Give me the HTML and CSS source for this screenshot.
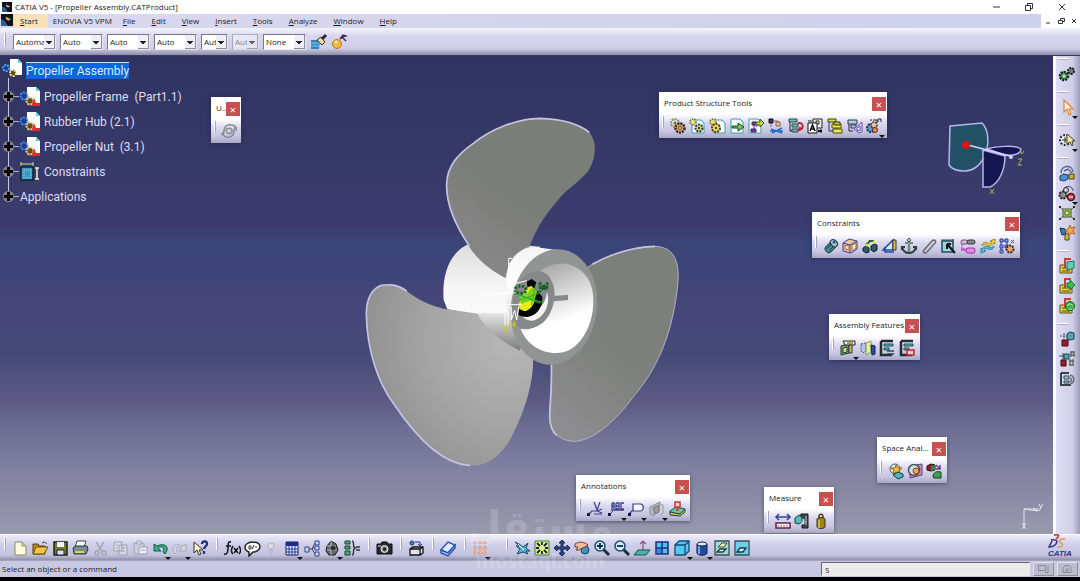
FILE: index.html
```html
<!DOCTYPE html>
<html lang="en">
<head>
<meta charset="utf-8">
<title>CATIA V5 - [Propeller Assembly.CATProduct]</title>
<link rel="stylesheet" href="styles.css">
</head>
<body>
<svg class="sprite" aria-hidden="true">
  <defs>
    <linearGradient id="hubL" x1="0" y1="0" x2="0" y2="1"><stop offset="0" stop-color="#dcdcdc"/><stop offset=".4" stop-color="#f6f6f6"/><stop offset="1" stop-color="#fff"/></linearGradient>
    <linearGradient id="hubR" x1="0" y1="0" x2="0" y2="1"><stop offset="0" stop-color="#f4f4f4"/><stop offset=".35" stop-color="#fff"/><stop offset=".65" stop-color="#e0e0e0"/><stop offset="1" stop-color="#7c7c7c"/></linearGradient>
    <linearGradient id="bore" x1="0" y1="0" x2=".3" y2="1"><stop offset="0" stop-color="#999"/><stop offset=".35" stop-color="#c9c9c9"/><stop offset=".75" stop-color="#fff"/></linearGradient>
    <radialGradient id="bladeL" cx=".85" cy=".3" r=".95"><stop offset="0" stop-color="#b6b7b6"/><stop offset=".55" stop-color="#a2a3a2"/><stop offset="1" stop-color="#8c8d8c"/></radialGradient>
    <linearGradient id="bladeR" x1=".2" y1="1" x2=".6" y2=".3"><stop offset="0" stop-color="#8e8d90"/><stop offset=".6" stop-color="#7f817e"/><stop offset="1" stop-color="#7d7f7b"/></linearGradient>
    <linearGradient id="bladeT" x1="0" y1="1" x2=".4" y2=".4"><stop offset="0" stop-color="#8a898c"/><stop offset="1" stop-color="#7b7d79"/></linearGradient>
  </defs>
  <symbol id="app" viewBox="0 0 12 12"><path fill="#101018" d="M0 0h12v12H0z"/><path fill="#2d5f95" d="M0 5l4 2 3 5H0z"/><path fill="#e9a35a" d="M5 3l5 2-3 2z"/><path fill="#f4e6c8" d="M4 3l3 2-1 1z"/></symbol>
  <symbol id="gears" viewBox="0 0 18 18"><circle cx="6" cy="6" r="4" fill="#dfe6b0" stroke="#8a8a78" stroke-width="2" stroke-dasharray="2 1"/><circle cx="6" cy="6" r="1.5" fill="#5a66b0"/><circle cx="11" cy="11" r="4.500" fill="#f0a860" stroke="#33271c" stroke-width="2.500" stroke-dasharray="2 1"/><circle cx="11" cy="11" r="1.500" fill="#fff" stroke="#333"/></symbol>
  <symbol id="docgear" viewBox="0 0 18 18"><path d="M4 3h9l3 3v10H4z" fill="#f4fbff" stroke="#3aa0a8"/><circle cx="5" cy="5" r="3" fill="#e5e070" stroke="#6a6a40" stroke-width="1.500" stroke-dasharray="1.500 1"/><circle cx="11" cy="11" r="3.500" fill="#d8d858" stroke="#27395a" stroke-width="2" stroke-dasharray="2 1"/><circle cx="11" cy="11" r="1" fill="#111"/></symbol>
  <symbol id="docgear2" viewBox="0 0 18 18"><path d="M6 3h8l3 3v10H6z" fill="#f4fbff" stroke="#3aa0a8"/><circle cx="5" cy="5" r="3" fill="#eee06a" stroke="#6a6a40" stroke-width="1.500" stroke-dasharray="1.500 1"/><circle cx="8" cy="11" r="4" fill="#f3d75a" stroke="#4a4020" stroke-width="2" stroke-dasharray="2 1"/><circle cx="8" cy="11" r="1" fill="#111"/></symbol>
  <symbol id="docarrow" viewBox="0 0 18 18"><path d="M3 2h9l3 3v11H3z" fill="#f4fbff" stroke="#3aa0a8"/><path d="M4 9h6V6l6 4-6 4v-3H4z" fill="#6fc95a" stroke="#1b4c1b"/></symbol>
  <symbol id="docarrow2" viewBox="0 0 18 18"><path d="M2 2h9l3 3v11H2z" fill="#f4fbff" stroke="#3aa0a8"/><path d="M5 5h4v3H5zM4 12h5v3H4zM7 8v4M9 10l3-4" fill="#7a3a9a" stroke="#4a1c6a"/><path d="M9 5h4V2l4 4-4 4V8H9z" fill="#c8dc4a" stroke="#38521b"/></symbol>
  <symbol id="replace" viewBox="0 0 18 18"><path d="M2 2h4v4H2z" fill="#3a3a5a" stroke="#111"/><path d="M6 4h5v5M4 6v4" stroke="#8a5a8a" fill="none"/><path d="M9 5h4v4H9z" fill="#e8c8b0" stroke="#8a5a3a"/><path d="M4 12l11 4M15 11L5 16M3 14h13" stroke="#2a6cd0" stroke-width="1.600"/></symbol>
  <symbol id="reorder" viewBox="0 0 18 18"><path d="M2 2h8v3H2zM5 7h6v3H5zM5 12h6v3H5z" fill="#78b8b8" stroke="#264a4e"/><path d="M3 5v9h2" stroke="#222" fill="none"/><path d="M11 6c6-1 6 6 1 7l1-3" stroke="#c0242c" stroke-width="2" fill="none"/></symbol>
  <symbol id="number" viewBox="0 0 18 18"><path d="M7 2h9v9H7z" fill="#eee" stroke="#222"/><path d="M10 4h3v3h-3zM2 4h4M15 12v4" stroke="#222" fill="none"/><path d="M2 6h9v10H2z" fill="#fff" stroke="#111"/><path d="M4 14l2.500-6L9 14M5 12h3" stroke="#111" stroke-width="1.600" fill="none"/><path d="M12 14h4" stroke="#111" stroke-width="2"/></symbol>
  <symbol id="selload" viewBox="0 0 18 18"><path d="M2 2h8v3H2z" fill="#e8dc30" stroke="#2c3a22"/><path d="M6 7h9v4H6zM7 12h9v4H7z" fill="#f3e640" stroke="#4c4a12"/><path d="M3 5v9h4" stroke="#235" fill="none"/><path d="M8 5h6v3H8z" fill="#d7c623" stroke="#333"/></symbol>
  <symbol id="manage" viewBox="0 0 18 18"><path d="M2 3h9v4H2zM5 8h5v3H5z" fill="#a9cfe0" stroke="#33394e"/><path d="M3 7v7h4" stroke="#223" fill="none"/><path d="M8 12l8-7v10l-3 1z" fill="#dcc8f4" stroke="#7a52b8"/><path d="M11 11l3-2v4l-3 1z" fill="#fff" stroke="#4a55b8"/></symbol>
  <symbol id="multi" viewBox="0 0 18 18"><circle cx="6" cy="11" r="4" fill="#5a9ad0" stroke="#1d2f4c" stroke-width="2" stroke-dasharray="2 1"/><circle cx="9" cy="8" r="3" fill="#e7c3a0" stroke="#4a3424" stroke-width="1.500" stroke-dasharray="2 1"/><path d="M8 3h4v3M13 5V2h3v3M5 3h2" stroke="#222" fill="none"/><circle cx="10" cy="13" r="2.500" fill="#e8954a" stroke="#422"/></symbol>
  <symbol id="coin" viewBox="0 0 18 18"><g transform="rotate(-45 9 9)"><rect x="2" y="6" width="14" height="7" rx="3" fill="#4f9aa0" stroke="#143c44"/><ellipse cx="13" cy="9" rx="3" ry="4" fill="#9fc9cc" stroke="#1d3f46"/><path d="M4 8h7M4 11h6" stroke="#163f48"/></g><circle cx="12" cy="5" r="1.500" fill="#3c4c8a"/></symbol>
  <symbol id="contact" viewBox="0 0 18 18"><path d="M2 6l6-4 8 2v8l-6 4-8-2z" fill="#e9c8a0" stroke="#3c3c9c"/><path d="M2 6l7 2v8M9 8l7-4" stroke="#3c3c9c" fill="none"/><path d="M4 8l4 1v4l-4-1zM11 8l4-2v5l-4 3z" fill="#f5eab8" stroke="#b06a3a"/></symbol>
  <symbol id="offset" viewBox="0 0 18 18"><path d="M2 11l3-2 3 2v4l-3 1-3-2zM10 9l3-2 3 1v5l-3 2-3-2z" fill="#2f5d64" stroke="#0e2328"/><path d="M5 8l4-4M8 4h5" stroke="#2c6a2c" stroke-width="2"/><circle cx="6" cy="8" r="1.500" fill="#e8e040"/><circle cx="13" cy="5" r="1.500" fill="#e8e040"/></symbol>
  <symbol id="angle" viewBox="0 0 18 18"><path d="M2 13L12 3v10z" fill="#cfe6f4" stroke="#2846a8" stroke-width="1.500"/><path d="M12 3h3v10h-3z" fill="#e5c34a" stroke="#3a3226"/><path d="M4 10v5h9" fill="none" stroke="#2846a8" stroke-width="1.400"/></symbol>
  <symbol id="anchor" viewBox="0 0 18 18"><path d="M9 4v12M5 6h8M2 10c1 4 4 6 7 6s6-2 7-6M2 13v-3h3M16 13v-3h-3" fill="none" stroke="#31433c" stroke-width="2.200"/><circle cx="9" cy="3" r="1.500" fill="#fff" stroke="#31433c"/><path d="M9 6v9M5 6h8" stroke="#b3d0b4"/></symbol>
  <symbol id="clip" viewBox="0 0 18 18"><path d="M5 12l7-8c2-2 5 0 3 2l-8 9c-2 2-5 0-3-2l7-8" fill="none" stroke="#6e6e72" stroke-width="1.600"/></symbol>
  <symbol id="quick" viewBox="0 0 18 18"><path d="M3 4h11v11H3z" fill="#9ed2dc" stroke="#1f4a64" stroke-width="1.500"/><path d="M2 3h13M14 2v5" stroke="#4a4a4a"/><path d="M8 7l8 9M8 7v5M8 7h4" stroke="#111" stroke-width="2"/></symbol>
  <symbol id="flex" viewBox="0 0 18 18"><rect x="2" y="3" width="7" height="4" rx="2" fill="#d9c4dd" stroke="#6f466f"/><rect x="8" y="3" width="8" height="4" rx="2" fill="#8c8c98" stroke="#333"/><path d="M3 7v6h5" stroke="#a838b8" fill="none" stroke-dasharray="2 1"/><rect x="7" y="11" width="9" height="5" rx="2" fill="#e48ae8" stroke="#93309a"/><path d="M2 11h4v3H2z" fill="#d05ada"/></symbol>
  <symbol id="change" viewBox="0 0 18 18"><path d="M3 9c0-4 4-4 6-3s3 1 4-1l-2-1 5-2v5l-1-1c-2 3-5 3-7 2S5 7 3 9z" fill="#f0d838" stroke="#a08a1c"/><path d="M15 9c0 4-4 4-6 3s-3-1-4 1l2 1-5 2v-5l1 1c2-3 5-3 7-2s3 1 5-1z" fill="#52bfe0" stroke="#2a7fa0"/></symbol>
  <symbol id="reuse" viewBox="0 0 18 18"><path d="M2 2h3v3H2zM7 2h3v3H7zM2 8h3v3H2zM2 13h3v3H2zM7 8h3v3H7zM5 4h2M3 5v3M9 5v3M3 11v2" fill="#8fa9e8" stroke="#2a3c9c"/><path d="M13 3l3 3M16 3l-3 3" stroke="#555"/><circle cx="12" cy="12" r="3.500" fill="#e2a868" stroke="#3b2a1c" stroke-width="2" stroke-dasharray="2 1"/></symbol>
  <symbol id="hole" viewBox="0 0 18 18"><path d="M2 7l8-2v9l-8 2z" fill="#7fa86a" stroke="#243a1e"/><path d="M4 9l4-1v5l-4 1z" fill="#c5e5b4" stroke="#243a1e"/><path d="M4 2h12v4H6z" fill="#eee" stroke="#222"/><path d="M8 4h6" stroke="#c09b2a" stroke-width="2"/><path d="M10 6h3v8h-3z" fill="#b9c958" stroke="#333"/></symbol>
  <symbol id="symm" viewBox="0 0 18 18"><path d="M2 5l5-1v8l-3 2-2-2z" fill="#b9c4e0" stroke="#4a568a" stroke-dasharray="2 1"/><path d="M7 4l5-2v11l-5 3z" fill="#e4efa2" stroke="#849a48"/><path d="M12 6l4 1v8l-3 1z" fill="#2f4aa8" stroke="#141f4c"/></symbol>
  <symbol id="assoc" viewBox="0 0 18 18"><path d="M3 2h12M3 2v14h11" stroke="#222c33" stroke-width="2.500" fill="none"/><path d="M6 5h9v2H6zM6 9h5v2H6z" fill="#5dbfc0" stroke="#1d4a52"/><path d="M9 12h7M9 15h7" stroke="#2d4a52" stroke-width="1.500"/></symbol>
  <symbol id="assoc2" viewBox="0 0 18 18"><path d="M3 2h12M3 2v14h11" stroke="#222c33" stroke-width="2.500" fill="none"/><path d="M6 5h9v2H6zM6 9h5v2H6z" fill="#5dbfc0" stroke="#1d4a52"/><path d="M9 11h7v5H9z" fill="#f4c8c8" stroke="#c8202c" stroke-width="1.500"/></symbol>
  <symbol id="clash" viewBox="0 0 18 18"><circle cx="8" cy="7" r="5" fill="#d7edf0" stroke="#4a5a5c"/><path d="M9 3l2 3h4l-3 2 1 4-4-2-3 2 1-4-3-2h4z" fill="#f0be38" stroke="#9a6418"/><path d="M6 13l5-3 5 2v3l-5 2z" fill="#4fb4b8" stroke="#153e42"/></symbol>
  <symbol id="section" viewBox="0 0 18 18"><path d="M4 4l12-2v11L4 16z" fill="#b595b8" stroke="#6c3c6e"/><circle cx="8" cy="8" r="5.500" fill="#cfe4e8" stroke="#47525a" stroke-width="1.500"/><circle cx="10" cy="9" r="3" fill="#f0a850" stroke="#903c28"/></symbol>
  <symbol id="distband" viewBox="0 0 18 18"><path d="M2 4l4-2 4 1v5l-4 1-4-1z" fill="#8a2030" stroke="#24100e"/><path d="M6 4l4-1v5l-4 1z" fill="#2e8a3c"/><path d="M11 3l4 4M15 3v4h-4" stroke="#6a3a9a" fill="none" stroke-width="1.500"/><path d="M8 15c0-5 4-6 8-5v6H9z" fill="#3fa048" stroke="#123c1c"/></symbol>
  <symbol id="weld" viewBox="0 0 18 18"><path d="M3 14l3-3h5l5-2M8 2l3 8 3-8M8 14h8M11 11l5 2" fill="none" stroke="#3c3f88" stroke-width="1.200"/><path d="M1 13h3v3H1z" fill="#16183c"/></symbol>
  <symbol id="note" viewBox="0 0 18 18"><path d="M5 9V3M5 3h2v6M5 6h2M9 3v6h3V3H9M9 6h3M17 3h-3v6h3M4 10h13" fill="none" stroke="#3c3f88" stroke-width="1.300"/><path d="M6 11l-4 4" stroke="#3c3f88"/><path d="M1 13h3v3H1z" fill="#16183c"/></symbol>
  <symbol id="flag" viewBox="0 0 18 18"><path d="M6 4h8c3 1 3 6 0 7H6zM6 10l-4 4" fill="#f6f6ff" stroke="#3c3f88" stroke-width="1.200"/><path d="M1 13h3v3H1z" fill="#16183c"/></symbol>
  <symbol id="views" viewBox="0 0 18 18"><path d="M2 7l10-5v8l-6 3v3l-4-2z" fill="#bdbdc0" stroke="#8a8a90"/><path d="M5 8l6-3v7l-4 2z" fill="#9a9aa0" stroke="#77777c"/><path d="M12 4l3 1v8l-3 2" fill="#d5d5d8" stroke="#99999e"/></symbol>
  <symbol id="annot3d" viewBox="0 0 18 18"><path d="M2 11l6-4 9 2-5 5-10-1z" fill="#6cc4a0" stroke="#164c3c"/><path d="M2 12v3l10 1 5-4V9l-5 5z" fill="#e0b048" stroke="#164c3c"/><path d="M7 2h5v5H7z" fill="#f8d8d8" stroke="#cc3030" stroke-width="1.500"/><path d="M9.500 7v4" stroke="#cc3030" stroke-width="2"/></symbol>
  <symbol id="measure" viewBox="0 0 18 18"><path d="M2 5h14M5 2L2 5l3 3M13 2l3 3-3 3" fill="none" stroke="#3345a0" stroke-width="1.600"/><path d="M2 11h14v5H2z" fill="#fff" stroke="#5a2440" stroke-width="1.500"/><path d="M4 13v2M7 13v2M10 13v2M13 13v2" stroke="#c04060"/></symbol>
  <symbol id="caliper" viewBox="0 0 18 18"><path d="M8 2h7v14H9v-3h3V6H7z" fill="#3c4c50" stroke="#14181c"/><path d="M2 6l4-3 3 2v5l-3 2-4-1z" fill="#4ec4b0" stroke="#1d3a48"/><path d="M8 10h5M13 4v9" stroke="#c5ccd0"/></symbol>
  <symbol id="inertia" viewBox="0 0 18 18"><path d="M5 7c2-2 6-2 8 0v8c-2 2-6 2-8 0z" fill="#9c8420" stroke="#3a2f0c"/><path d="M7 8v8" stroke="#dcc654" stroke-width="1.500"/><path d="M7 6c-1-5 5-5 4 0" fill="none" stroke="#4a3c14" stroke-width="1.500"/></symbol>
  <symbol id="update" viewBox="0 0 18 18"><path d="M1 12c2 1 3 0 3-3 0-5 4-7 8-6 4 0 5 4 4 6M17 6c-2-1-3 0-3 3 0 5-4 7-8 6-3-1-4-4-2-6M6 9c0-3 6-4 6 0s-6 3-5 0" fill="none" stroke="#8a8a8a" stroke-width="1.500"/></symbol>
  <symbol id="new" viewBox="0 0 18 18"><path d="M4 3h7l4 4v9H4z" fill="#fffce0" stroke="#8c8a5c"/><path d="M11 3v4h4" fill="#d8d59c" stroke="#8c8a5c"/></symbol>
  <symbol id="open" viewBox="0 0 18 18"><path d="M2 5h5l1 2h6v8H2z" fill="#c08a18" stroke="#5a3c0c"/><path d="M5 8h12l-4 7H2z" fill="#f2c744" stroke="#6a4a10"/><path d="M11 4c3-2 4 0 5 1" fill="none" stroke="#333"/></symbol>
  <symbol id="save" viewBox="0 0 18 18"><path d="M3 3h13v13H3z" fill="#6d7a3a" stroke="#1f2414" stroke-width="1.500"/><path d="M6 3h7v5H6z" fill="#f4f4ec"/><path d="M6 11h7v5H6z" fill="#dfe5ef" stroke="#22262c"/></symbol>
  <symbol id="print" viewBox="0 0 18 18"><path d="M6 2h9l-2 6H4z" fill="#fff" stroke="#444"/><path d="M2 9l3-2h11l1 3-2 5H3z" fill="#7a8f94" stroke="#22343a"/><path d="M4 13h9" stroke="#dcd64c" stroke-width="2"/></symbol>
  <symbol id="cut" viewBox="0 0 18 18"><path d="M5 3l6 9M13 3l-6 9" stroke="#a5a5b4" stroke-width="1.500"/><circle cx="6" cy="14" r="2" fill="none" stroke="#a5a5b4" stroke-width="1.500"/><circle cx="13" cy="14" r="2" fill="none" stroke="#a5a5b4" stroke-width="1.500"/></symbol>
  <symbol id="copy" viewBox="0 0 18 18"><path d="M3 3h8v9H3zM8 6h8v10H8z" fill="#d8d8e6" stroke="#a0a0b2"/><path d="M10 9h4M10 12h4M5 6h2M5 9h2" stroke="#a0a0b2"/></symbol>
  <symbol id="paste" viewBox="0 0 18 18"><path d="M3 4h10v11H3z" fill="#cdcdde" stroke="#a0a0b2"/><path d="M6 2h4v3H6zM8 8h8v7H8z" fill="#ececf6" stroke="#a0a0b2"/><path d="M10 11h4" stroke="#a0a0b2"/></symbol>
  <symbol id="undo" viewBox="0 0 18 18"><path d="M3 5v7h7L7 9c4-3 7 0 5 4l2 2c5-6 1-12-8-8z" fill="#3fae88" stroke="#0d5a44"/></symbol>
  <symbol id="redo" viewBox="0 0 18 18"><path d="M15 5v7H8l3-3c-4-3-7 0-5 4l-2 2C-1 9 3 3 12 7z" fill="#d4d4e2" stroke="#aaaabb"/></symbol>
  <symbol id="help" viewBox="0 0 18 18"><path d="M3 3v11l3-3 2 5 2-1-2-4h4z" fill="#fff8cc" stroke="#333"/><path d="M11 5c0-4 6-3 5 0 0 2-3 3-3 5M13 12v3" fill="none" stroke="#1d2c7c" stroke-width="2.200"/></symbol>
  <symbol id="fx" viewBox="0 0 18 18"><path d="M8 3C5 2 5 5 5 9s-1 7-4 6M3 7h5M10 7c-2 3-2 6 0 8M16 7c2 3 2 6 0 8M11 9l4 5M15 9l-4 5" fill="none" stroke="#15151c" stroke-width="1.500"/></symbol>
  <symbol id="comment" viewBox="0 0 18 18"><path d="M9 3c5 0 8 2 8 5s-4 5-7 5l-4 4v-4c-3-1-4-3-4-5s3-5 7-5z" fill="#fff" stroke="#222" stroke-width="1.500"/><path d="M6 7h2v3H6zM11 6l-2 4M12 8h2" fill="none" stroke="#333"/></symbol>
  <symbol id="bulb" viewBox="0 0 18 18"><circle cx="8" cy="7" r="3" fill="#dedeea" stroke="#b0b0c2"/><path d="M7 10h2v5H7z" fill="#cfcfe0" stroke="#b0b0c2"/></symbol>
  <symbol id="table" viewBox="0 0 18 18"><path d="M3 3h12v13H3z" fill="#e8ecff" stroke="#101c5c"/><path d="M3 3h12v4H3z" fill="#1c2c88"/><path d="M3 10h12M3 13h12M6 7v9M9 7v9M12 7v9" stroke="#27388c"/></symbol>
  <symbol id="graph" viewBox="0 0 18 18"><path d="M2 8h4v5H2zM12 2h4v4h-4zM12 7h4v4h-4zM12 13h4v4h-4z" fill="#cdd8f8" stroke="#30408c"/><path d="M6 10h3l3-6M9 9h3M9 10l3 5" stroke="#444" fill="none"/></symbol>
  <symbol id="lock" viewBox="0 0 18 18"><path d="M4 7l4-5 5 3 2 6-3 5H6l-3-4z" fill="#62666a" stroke="#16181a"/><path d="M8 2v14M4 7h9M4 11h10" stroke="#bbb"/><circle cx="10" cy="9" r="2.500" fill="#333"/></symbol>
  <symbol id="equiv" viewBox="0 0 18 18"><path d="M2 2h5v3H2zM2 7h5v3H2zM2 12h5v4H2z" fill="#52a878" stroke="#173c2c"/><path d="M9 2c3 0 0 6 3 7-3 1 0 7-3 7M13 8h4M13 11h4" fill="none" stroke="#33383c" stroke-width="1.400"/></symbol>
  <symbol id="camera" viewBox="0 0 18 18"><path d="M2 5h4l1-2h5l1 2h4v10H2z" fill="#25282c" stroke="#0c0d10"/><circle cx="9.500" cy="10" r="3.500" fill="#8c9198" stroke="#eee"/><circle cx="9.500" cy="10" r="1.500" fill="#111"/><path d="M3 7h3" stroke="#ddd"/></symbol>
  <symbol id="catalog" viewBox="0 0 18 18"><circle cx="5" cy="4" r="2" fill="#3c8cb8" stroke="#163c5a"/><path d="M8 3h5v4M11 5l2 2 2-2" stroke="#24388c" fill="none"/><path d="M3 10l3-2h10v6l-3 2H3zM3 10h10l3-2M13 10v6" fill="#e4e4e8" stroke="#111" stroke-width="1.300"/></symbol>
  <symbol id="eraser" viewBox="0 0 18 18"><path d="M2 11l7-8 7 3-7 8z" fill="#dcecff" stroke="#2a50b0" stroke-width="1.400"/><path d="M2 11v3l7 3 7-8V6l-7 8z" fill="#a4c4f0" stroke="#2a50b0" stroke-width="1.400"/></symbol>
  <symbol id="grid" viewBox="0 0 18 18"><path d="M2 4h14M2 9h14M2 14h14M4 2v14M9 2v14M14 2v14" stroke="#e0a890" stroke-width="2" stroke-dasharray="3 1"/></symbol>
  <symbol id="fly" viewBox="0 0 18 18"><path d="M2 3l4 2 4 3 5-4-2 5 4 3h-4l2 3-5-2-6 2 3-5-4-3 3 0z" fill="#5ab0d0" stroke="#174c6c"/><path d="M5 5l6 6" stroke="#fff"/></symbol>
  <symbol id="fit" viewBox="0 0 18 18"><path d="M2 2h14v14H2z" fill="#e4f07c" stroke="#3c7c4c"/><path d="M4 4l3 3M14 4l-3 3M4 14l3-3M14 14l-3-3M9 3v3M9 12v3M3 9h3M12 9h3" stroke="#16244c" stroke-width="1.800"/></symbol>
  <symbol id="pan" viewBox="0 0 18 18"><path d="M9 1l3 3h-2v4h4V6l3 3-3 3v-2h-4v4h2l-3 3-3-3h2v-4H4v2L1 9l3-3v2h4V4H6z" fill="#2c4c94" stroke="#142450"/></symbol>
  <symbol id="rotate" viewBox="0 0 18 18"><circle cx="12" cy="11" r="4" fill="#3c94c8" stroke="#154064"/><path d="M2 5c4-3 10-2 13 1l-3 2c-2 1-4 1-6 3H3l2-3H2z" fill="#f0bc9c" stroke="#703c2c"/></symbol>
  <symbol id="zoomin" viewBox="0 0 18 18"><path d="M10 10l6 6" stroke="#18303c" stroke-width="3"/><circle cx="7" cy="7" r="5" fill="#d0f0f4" stroke="#20486c" stroke-width="1.500"/><path d="M7 4v6M4 7h6" stroke="#14245c" stroke-width="1.800"/></symbol>
  <symbol id="zoomout" viewBox="0 0 18 18"><path d="M10 10l6 6" stroke="#18303c" stroke-width="3"/><circle cx="7" cy="7" r="5" fill="#d0f0f4" stroke="#20486c" stroke-width="1.500"/><path d="M4 7h6" stroke="#14245c" stroke-width="1.800"/></symbol>
  <symbol id="normal" viewBox="0 0 18 18"><path d="M1 16l4-5h12l-4 5z" fill="#4cb4ac" stroke="#17504c"/><path d="M10 12V3M7 5l3-3 3 3" fill="none" stroke="#8a4c8c" stroke-width="1.200"/></symbol>
  <symbol id="multiview" viewBox="0 0 18 18"><path d="M3 3h12v12H3z" fill="#4cc4ec" stroke="#182c84" stroke-width="1.500"/><path d="M9 3v12M3 9h12" stroke="#182c84" stroke-width="1.500"/><path d="M4 10h4v4H4z" fill="#3c84dc"/></symbol>
  <symbol id="cube" viewBox="0 0 18 18"><path d="M2 6l4-4h10v10l-4 4H2z" fill="#54c8f0" stroke="#184870" stroke-width="1.300"/><path d="M2 6h10v10M12 6l4-4" fill="none" stroke="#184870" stroke-width="1.300"/></symbol>
  <symbol id="cyl" viewBox="0 0 18 18"><path d="M4 5v9c0 3 10 3 10 0V5z" fill="#24489c" stroke="#101c44"/><path d="M6 6v9" stroke="#68b0f0" stroke-width="2"/><ellipse cx="9" cy="5" rx="5" ry="2" fill="#d8ecf8" stroke="#101c44"/></symbol>
  <symbol id="hide" viewBox="0 0 18 18"><path d="M2 2h14v14H2z" fill="#9cdcd4" stroke="#3c4c54" stroke-width="1.300"/><path d="M5 8l4-4h5l-3 4z" fill="#f0ecb0" stroke="#324c44"/><path d="M4 13l3-3h6l-3 3z" fill="#e8f4e0" stroke="#183c3c" stroke-width="1.300"/></symbol>
  <symbol id="swap" viewBox="0 0 18 18"><path d="M2 2h14v14H2z" fill="#6cd0ec" stroke="#3c4c54" stroke-width="1.300"/><path d="M4 13l3-4h6l-3 4z" fill="#d8f0ec" stroke="#183c3c" stroke-width="1.300"/></symbol>
  <symbol id="brush" viewBox="0 0 18 18"><path d="M1 7h9l-1 9H1z" fill="#2c84c8"/><path d="M1 10h8M1 13h8" stroke="#8cd0f0"/><path d="M7 7l5 5 3-3-4-5z" fill="#e8dc98" stroke="#333"/><path d="M12 6l4-4" stroke="#26282c" stroke-width="3"/></symbol>
  <symbol id="wizard" viewBox="0 0 18 18"><circle cx="7" cy="11" r="4.500" fill="#f0b83c" stroke="#b4781c"/><circle cx="6" cy="9" r="1.500" fill="#fff0b8"/><path d="M10 6l3-4 3 1-3 1zM12 4l4 4" fill="#5c3c78" stroke="#3c2450" stroke-width="1.300"/></symbol>
  <symbol id="asmdesign" viewBox="0 0 18 18"><circle cx="6" cy="11" r="4" fill="#4c9c5c" stroke="#15261c" stroke-width="2.500" stroke-dasharray="2 1"/><circle cx="6" cy="11" r="1.500" fill="#bcdcc4"/><circle cx="13" cy="6" r="3" fill="#70807c" stroke="#15201c" stroke-width="2" stroke-dasharray="2 1"/></symbol>
  <symbol id="pointer" viewBox="0 0 18 18"><path d="M6 2v12l3-3 2 6 2-1-2-5h4z" fill="#fff4e0" stroke="#dc8444" stroke-width="1.200"/></symbol>
  <symbol id="selgear" viewBox="0 0 18 18"><circle cx="7" cy="9" r="5" fill="#ececf0" stroke="#26262c" stroke-width="2" stroke-dasharray="2 1.500"/><path d="M7 6v6M4 9h6" stroke="#333"/><path d="M9 3v10l3-2 2 4 1-1-1-4h3z" fill="#f8ec9c" stroke="#44402c"/></symbol>
  <symbol id="prodnav" viewBox="0 0 18 18"><path d="M3 9c0-8 11-9 12-1M6 7l4-2 4 4" fill="none" stroke="#54648c" stroke-width="1.400"/><path d="M2 12l3-2 5 1v4l-4 2-4-1z" fill="#4894d0" stroke="#163c6c"/><path d="M11 10h5v5h-5z" fill="#c8b438" stroke="#4c3c14"/></symbol>
  <symbol id="cgrswap" viewBox="0 0 18 18"><circle cx="5" cy="11" r="3.500" fill="#8c8c94" stroke="#222" stroke-width="2" stroke-dasharray="2 1"/><path d="M6 6c2-5 8-5 9 1" fill="none" stroke="#6c5ca8" stroke-width="1.400"/><circle cx="8" cy="6" r="2.500" fill="#cfcfd4" stroke="#222"/><circle cx="13" cy="13" r="3.500" fill="#d84858" stroke="#4c141c" stroke-width="1.500"/><path d="M11 13h4" stroke="#fff"/></symbol>
  <symbol id="explode" viewBox="0 0 18 18"><path d="M2 3l14 12M16 3L2 15" stroke="#445c2c"/><path d="M5 5h8v8H5z" fill="#b4cc5c" stroke="#445c2c"/><path d="M1 2h2v2H1zM15 2h2v2h-2zM1 14h2v2H1zM15 14h2v2h-2z" fill="#26341c"/><path d="M7 7h4v4H7z" fill="#e4ec9c" stroke="#445c2c"/></symbol>
  <symbol id="manip" viewBox="0 0 18 18"><path d="M2 4l5 1 1 5-4 1z" fill="#3c7cb8" stroke="#152c4c"/><path d="M7 10h4v6H7z" fill="#d0c040" stroke="#4c4414"/><path d="M12 1l1 3 4-1-2 4 2 3-4-1-2 3-1-4-3-1 3-2z" fill="#f0a848" stroke="#b4642c"/></symbol>
  <symbol id="comp" viewBox="0 0 18 18"><path d="M2 8h5v3h7v5H2z" fill="#e4d040" stroke="#544c14"/><path d="M7 10V2h6" fill="none" stroke="#d03c2c" stroke-width="2"/><path d="M9 5l7-1v7l-7 2z" fill="#5cd0b8" stroke="#1c7464"/><path d="M4 11h3M4 14h8" stroke="#544c14"/></symbol>
  <symbol id="comp2" viewBox="0 0 18 18"><path d="M2 8h5v3h7v5H2z" fill="#e4d040" stroke="#544c14"/><path d="M7 10V2h6" fill="none" stroke="#d03c2c" stroke-width="2"/><path d="M9 6h3V3l5 5-5 5v-3H9z" fill="#3cc448" stroke="#14701c"/><path d="M4 11h3M4 14h8" stroke="#544c14"/></symbol>
  <symbol id="comp3" viewBox="0 0 18 18"><path d="M2 8h5v3h7v5H2z" fill="#e4d040" stroke="#544c14"/><path d="M7 10V2h6" fill="none" stroke="#d03c2c" stroke-width="2"/><path d="M4 11h3M4 14h8" stroke="#544c14"/><circle cx="12" cy="9" r="4.500" fill="#3cb44c" stroke="#145c20"/><path d="M9 9c2-3 5-2 6 0M15 11c-2 2-4 2-5 0" fill="none" stroke="#b8f0b8"/></symbol>
  <symbol id="tree1" viewBox="0 0 18 18"><path d="M2 6h14M6 3v12" stroke="#444c54" stroke-dasharray="2 1"/><path d="M9 4l3-2 4 1v6l-4 1-3-1z" fill="#4ca4b4" stroke="#18404c"/><path d="M4 10h6v6H4z" fill="#94202c" stroke="#3c1014"/></symbol>
  <symbol id="tree2" viewBox="0 0 18 18"><path d="M1 6h9M5 3v9" stroke="#444c54"/><path d="M6 4h5v5H6z" fill="#4ca4b4" stroke="#18404c"/><path d="M3 10h5v6H3z" fill="#94202c" stroke="#3c1014"/><path d="M12 2h5M12 5h5M13 2v5M16 2v5M11 11h5M11 15h5M12 9v6M15 9v6" stroke="#64645c" stroke-width="1.300"/></symbol>
  <symbol id="tree3" viewBox="0 0 18 18"><path d="M3 3h8M3 3v12h10" stroke="#34444c" stroke-width="2" fill="none"/><path d="M6 6h5v3H6zM6 11h5v2H6z" fill="#a8ccd0" stroke="#34444c"/><path d="M12 5c5 1 5 8 0 9M12 8c2 1 2 3 0 4" fill="none" stroke="#5c6c74" stroke-width="1.500"/></symbol>
  <symbol id="product" viewBox="0 0 20 20"><path d="M8 1h8l4 4v12H8z" fill="#fff"/><path d="M16 1l4 4h-4z" fill="#54d4e4"/><circle cx="4" cy="10" r="3" fill="#1c3c8c" stroke="#4ca4f4" stroke-width="2" stroke-dasharray="2 1"/><circle cx="11" cy="15" r="3" fill="#5c481c" stroke="#f4d88c" stroke-width="2" stroke-dasharray="2 1"/></symbol>
  <symbol id="part" viewBox="0 0 20 20"><path d="M7 0h9l4 4v13H7z" fill="#fff"/><path d="M16 0l4 4h-4z" fill="#54d4e4"/><circle cx="4" cy="9" r="3.500" fill="#1c3c8c" stroke="#4494f4" stroke-width="2" stroke-dasharray="2 1"/><circle cx="10" cy="14" r="3.500" fill="#6c481c" stroke="#f4d08c" stroke-width="2" stroke-dasharray="2 1"/><path d="M14 11l2 5h4v3h-8z" fill="#dc2c2c"/></symbol>
  <symbol id="constr" viewBox="0 0 20 20"><path d="M1 5h12v13H1z" fill="#3c9cc0" stroke="#0c2434" stroke-width="1.500"/><path d="M4 8h7v8H4z" fill="none" stroke="#94d8f0" stroke-dasharray="1 1"/><path d="M1 2h12M1 0v4M13 0v4" stroke="#d0dc8c"/><path d="M15 6h4M15 17h4M17 6v11" stroke="#f4f4c8" stroke-width="1.500"/></symbol>
</svg>

<header class="titlebar">
  <svg class="app-icon"><use href="#app"/></svg>
  <h1 class="title">CATIA V5 - [Propeller Assembly.CATProduct]</h1>
  <div class="win-controls">
    <button aria-label="Minimize"><svg viewBox="0 0 10 10"><path d="M2 5h7"/></svg></button>
    <button aria-label="Restore"><svg viewBox="0 0 10 10"><path d="M1.500 3.500h5v5h-5zM3.500 3V1.500h5v5H7"/></svg></button>
    <button aria-label="Close"><svg viewBox="0 0 10 10"><path d="M2 2l6 6M8 2L2 8"/></svg></button>
  </div>
</header>

<nav class="menubar" aria-label="Main menu">
  <svg class="app-icon big"><use href="#app"/></svg>
  <button class="menu start"><u>S</u>tart</button>
  <button class="menu vpm">ENOVIA V5 VPM</button>
  <button class="menu"><u>F</u>ile</button>
  <button class="menu"><u>E</u>dit</button>
  <button class="menu"><u>V</u>iew</button>
  <button class="menu"><u>I</u>nsert</button>
  <button class="menu"><u>T</u>ools</button>
  <button class="menu"><u>A</u>nalyze</button>
  <button class="menu"><u>W</u>indow</button>
  <button class="menu"><u>H</u>elp</button>
  <div class="doc-controls">
    <button aria-label="Minimize document"><svg viewBox="0 0 10 10"><path d="M3 7h4"/></svg></button>
    <button aria-label="Restore document"><svg viewBox="0 0 10 10"><path d="M2.500 4.500h4v3h-4zM4.500 4V2.500h4v3H7"/></svg></button>
    <button aria-label="Close document"><svg viewBox="0 0 10 10"><path d="M3 3l4 4M7 3L3 7"/></svg></button>
  </div>
</nav>

<div class="propbar" role="toolbar" aria-label="Graphic properties">
  <span class="grip"></span>
  <label class="combo"><select aria-label="Fill color"><option>Automatic</option></select></label>
  <label class="combo"><select aria-label="Transparency"><option>Auto</option></select></label>
  <label class="combo"><select aria-label="Line weight"><option>Auto</option></select></label>
  <label class="combo"><select aria-label="Line type"><option>Auto</option></select></label>
  <label class="combo small"><select aria-label="Point symbol"><option>Auto</option></select></label>
  <label class="combo small off"><select aria-label="Rendering style" disabled><option>Auto</option></select></label>
  <label class="combo"><select aria-label="Layer"><option>None</option></select></label>
  <button class="tool" aria-label="Painter"><svg><use href="#brush"/></svg></button>
  <button class="tool" aria-label="Wizard"><svg><use href="#wizard"/></svg></button>
</div>

<div class="workspace">
  <main class="viewport">
    <svg class="propeller" viewBox="0 0 1080 1140" role="img" aria-label="Propeller assembly">
      <path fill="url(#hubL)" d="M390 430C330 455 305 520 311 600L322 628L420 645L520 760L590 640L600 440L500 430z"/>
      <path fill="url(#bladeR)" stroke="#b2b0ca" stroke-width="3" d="M745 500C800 465 880 440 945 439C1000 441 1018 480 1014 545C1000 700 950 810 880 890C830 960 760 1022 705 1024C655 1024 628 990 629 950C632 880 636 850 635 780z"/>
      <path fill="none" stroke="#c6c4e2" stroke-width="5" d="M757 493C810 463 880 440 945 439M634 795C636 850 632 880 629 950C630 980 638 996 650 1006"/>
      <path fill="url(#bladeL)" d="M310 626C270 616 235 600 200 573C170 553 150 552 125 556C90 568 80 600 79 640C80 750 115 850 160 910C220 1000 300 1092 390 1097C450 1100 490 1060 520 1000C555 930 580 850 580 775L420 642z"/>
      <path fill="none" stroke="#c6c4e2" stroke-width="5" d="M200 573C170 553 150 552 125 556C90 568 80 600 79 640C80 750 115 850 160 910C220 1000 300 1092 390 1097"/>
      <path fill="url(#hubR)" d="M500 535C505 480 540 436 590 442L690 455L560 600L540 752C480 725 430 680 412 640L500 640z"/>
      <path fill="url(#bladeT)" d="M497 534C430 500 390 455 365 400C335 350 318 300 320 250C322 200 350 165 400 130C450 90 530 55 600 55C680 57 720 75 748 97C775 130 765 180 745 212C720 245 680 265 650 305C610 350 585 395 568 440C525 455 505 480 497 534z"/>
      <path fill="none" stroke="#c6c4e2" stroke-width="5" d="M388 438C335 360 318 300 320 250C322 200 350 165 400 130C450 90 530 55 600 55C680 57 720 75 748 97"/>
      <ellipse cx="642" cy="621" rx="129" ry="174" transform="rotate(8 642 621)" fill="#929393"/>
      <path fill="url(#bore)" d="M592 522C620 490 670 482 705 500C745 520 762 560 760 610C758 680 720 745 670 757C610 767 560 735 542 686C590 700 640 640 640 585C640 545 620 525 592 522z"/>
      <path fill="#87888a" d="M530 560C550 520 590 500 620 522C650 550 650 600 630 640C610 680 570 695 535 680C510 640 515 600 530 560z"/>
      <path fill="#f4f4f4" d="M540 640C590 650 620 610 620 575C635 610 610 660 575 662C560 662 548 654 540 640z"/>
      <path fill="#88898b" d="M640 588L684 584V600L640 604z"/>
      <path fill="#050505" d="M535 645C575 665 610 630 607 590L590 570C585 610 560 630 537 628zM560 545l15-8 14 10-6 18-20-2z"/>
      <path fill="#eaea18" d="M536 610C550 600 550 560 575 558C592 580 588 620 560 632C545 635 536 628 536 610z"/>
      <path fill="#7bd021" d="M538 590l25-10 14-20 15 14-8 24-40 14z"/>
      <path fill="none" stroke="#12602a" stroke-width="9" stroke-dasharray="7 4" d="M526 566c6-12 28-10 32 2s-24 18-32 4M598 548l24 24M624 548l-26 28M596 562h32"/>
      <path fill="none" stroke="#28b428" stroke-width="3" d="M520 580l90 28M540 600l66-24M588 556l-14 60M600 610l-60-24"/>
      <path fill="none" stroke="#fff" stroke-width="3" d="M420 584l105-6M440 615h28v30M506 475v60M506 475h10M506 490h10M495 614h50M495 614v62M504 616v60M514 620v40l10-30 6 30 6-40M520 552l40-10"/>
      <path fill="none" stroke="#c8c828" stroke-width="4" d="M490 680l8 10 8-10M498 690v12M514 664v18M514 674h10M524 664v18"/>
    </svg>

    <svg class="compass" viewBox="0 0 84 80" role="img" aria-label="Compass">
      <path fill="#225064" stroke="#b8b4ee" stroke-width="1.500" d="M9 5l32-3c6 6 7 18 5 26-4 14-12 22-23 22-8 0-13-3-15-6z"/>
      <path fill="#141650" stroke="#b8b4ee" stroke-width="1.500" d="M46 28c10-3 29-4 34 0 0 5-8 7-16 6zM42 29l22 6c0 14-6 27-15 31h-7z"/>
      <path stroke="#d4d0ff" stroke-width="1.500" fill="none" d="M27 24l42 11"/>
      <circle cx="25" cy="24" r="4" fill="#e01414"/>
      <circle cx="70" cy="36" r="2" fill="#d4d0ff"/>
      <path stroke="#b4b458" fill="none" d="M77 38h4l-4 6h4M79 30l2 3 2-3M49 68l4 5M53 68l-4 5"/>
    </svg>

    <svg class="axes" viewBox="0 0 28 30" aria-hidden="true"><path d="M6 27V8l14 2-5-3M6 8h15M21 3l2 4M25 3l-4 7M4 22l4 6M8 22l-4 6" fill="none" stroke="#e4e4f0"/></svg>

    <ul class="tree" aria-label="Specification tree">
      <li class="root"><svg class="node"><use href="#product"/></svg><span class="selected">Propeller Assembly</span></li>
      <li><button class="expand" aria-label="Expand Propeller Frame"></button><svg class="node"><use href="#part"/></svg><span>Propeller Frame &nbsp;(Part1.1)</span></li>
      <li><button class="expand" aria-label="Expand Rubber Hub"></button><svg class="node"><use href="#part"/></svg><span>Rubber Hub (2.1)</span></li>
      <li><button class="expand" aria-label="Expand Propeller Nut"></button><svg class="node"><use href="#part"/></svg><span>Propeller Nut &nbsp;(3.1)</span></li>
      <li><button class="expand" aria-label="Expand Constraints"></button><svg class="node"><use href="#constr"/></svg><span>Constraints</span></li>
      <li><button class="expand" aria-label="Expand Applications"></button><span>Applications</span></li>
    </ul>

    <section class="palette p-update">
      <header><h2>U..</h2><button class="close" aria-label="Close">×</button></header>
      <div class="tools"><button class="tool" aria-label="Update all" disabled><svg><use href="#update"/></svg></button></div>
    </section>
    <section class="palette p-structure">
      <header><h2>Product Structure Tools</h2><button class="close" aria-label="Close">×</button></header>
      <div class="tools">
        <button class="tool" aria-label="Component"><svg><use href="#gears"/></svg></button>
        <button class="tool" aria-label="Product"><svg><use href="#docgear"/></svg></button>
        <button class="tool" aria-label="Part"><svg><use href="#docgear2"/></svg></button>
        <button class="tool" aria-label="Existing component"><svg><use href="#docarrow"/></svg></button>
        <button class="tool" aria-label="Existing component with positioning"><svg><use href="#docarrow2"/></svg></button>
        <button class="tool" aria-label="Replace component"><svg><use href="#replace"/></svg></button>
        <button class="tool" aria-label="Graph tree reordering"><svg><use href="#reorder"/></svg></button>
        <button class="tool" aria-label="Generate numbering"><svg><use href="#number"/></svg></button>
        <button class="tool" aria-label="Selective load"><svg><use href="#selload"/></svg></button>
        <button class="tool" aria-label="Manage representations"><svg><use href="#manage"/></svg></button>
        <button class="tool more" aria-label="Multi-instantiation"><svg><use href="#multi"/></svg></button>
      </div>
    </section>
    <section class="palette p-constraints">
      <header><h2>Constraints</h2><button class="close" aria-label="Close">×</button></header>
      <div class="tools">
        <button class="tool" aria-label="Coincidence"><svg><use href="#coin"/></svg></button>
        <button class="tool" aria-label="Contact"><svg><use href="#contact"/></svg></button>
        <button class="tool" aria-label="Offset"><svg><use href="#offset"/></svg></button>
        <button class="tool" aria-label="Angle"><svg><use href="#angle"/></svg></button>
        <button class="tool" aria-label="Fix component"><svg><use href="#anchor"/></svg></button>
        <button class="tool" aria-label="Fix together"><svg><use href="#clip"/></svg></button>
        <button class="tool" aria-label="Quick constraint"><svg><use href="#quick"/></svg></button>
        <button class="tool" aria-label="Flexible sub-assembly"><svg><use href="#flex"/></svg></button>
        <button class="tool" aria-label="Change constraint"><svg><use href="#change"/></svg></button>
        <button class="tool" aria-label="Reuse pattern"><svg><use href="#reuse"/></svg></button>
      </div>
    </section>
    <section class="palette p-features">
      <header><h2>Assembly Features</h2><button class="close" aria-label="Close">×</button></header>
      <div class="tools">
        <button class="tool more" aria-label="Hole"><svg><use href="#hole"/></svg></button>
        <button class="tool" aria-label="Symmetry"><svg><use href="#symm"/></svg></button>
        <button class="tool" aria-label="Associativity"><svg><use href="#assoc"/></svg></button>
        <button class="tool" aria-label="Remove associativity"><svg><use href="#assoc2"/></svg></button>
      </div>
    </section>
    <section class="palette p-space">
      <header><h2>Space Anal...</h2><button class="close" aria-label="Close">×</button></header>
      <div class="tools">
        <button class="tool" aria-label="Clash"><svg><use href="#clash"/></svg></button>
        <button class="tool" aria-label="Sectioning"><svg><use href="#section"/></svg></button>
        <button class="tool" aria-label="Distance and band analysis"><svg><use href="#distband"/></svg></button>
      </div>
    </section>
    <section class="palette p-annotations">
      <header><h2>Annotations</h2><button class="close" aria-label="Close">×</button></header>
      <div class="tools">
        <button class="tool" aria-label="Weld feature"><svg><use href="#weld"/></svg></button>
        <button class="tool more" aria-label="Text with leader"><svg><use href="#note"/></svg></button>
        <button class="tool more" aria-label="Flag note"><svg><use href="#flag"/></svg></button>
        <button class="tool more" aria-label="Views"><svg><use href="#views"/></svg></button>
        <button class="tool" aria-label="3D annotation query"><svg><use href="#annot3d"/></svg></button>
      </div>
    </section>
    <section class="palette p-measure">
      <header><h2>Measure</h2><button class="close" aria-label="Close">×</button></header>
      <div class="tools">
        <button class="tool" aria-label="Measure between"><svg><use href="#measure"/></svg></button>
        <button class="tool" aria-label="Measure item"><svg><use href="#caliper"/></svg></button>
        <button class="tool" aria-label="Measure inertia"><svg><use href="#inertia"/></svg></button>
      </div>
    </section>
  </main>

  <aside class="sidebar" role="toolbar" aria-label="Workbench tools">
    <div class="vgroup"><button class="tool" aria-label="Assembly design"><svg><use href="#asmdesign"/></svg></button></div>
    <div class="vgroup"><button class="tool more" aria-label="Select"><svg><use href="#pointer"/></svg></button></div>
    <div class="vgroup"><button class="tool more" aria-label="Product selection"><svg><use href="#selgear"/></svg></button></div>
    <div class="vgroup">
      <button class="tool" aria-label="Manipulation"><svg><use href="#prodnav"/></svg></button>
      <button class="tool more" aria-label="Snap"><svg><use href="#cgrswap"/></svg></button>
      <button class="tool" aria-label="Explode"><svg><use href="#explode"/></svg></button>
      <button class="tool" aria-label="Stop manipulate on clash"><svg><use href="#manip"/></svg></button>
    </div>
    <div class="vgroup">
      <button class="tool" aria-label="Scene component"><svg><use href="#comp"/></svg></button>
      <button class="tool" aria-label="Publish component"><svg><use href="#comp2"/></svg></button>
      <button class="tool" aria-label="Refresh component"><svg><use href="#comp3"/></svg></button>
    </div>
    <div class="vgroup">
      <button class="tool" aria-label="Product data"><svg><use href="#tree1"/></svg></button>
      <button class="tool" aria-label="Product properties"><svg><use href="#tree2"/></svg></button>
      <button class="tool" aria-label="Product list"><svg><use href="#tree3"/></svg></button>
    </div>
  </aside>
</div>

<div class="bottombar" role="toolbar" aria-label="Standard and view tools">
  <div class="hgroup">
    <button class="tool" aria-label="New"><svg><use href="#new"/></svg></button>
    <button class="tool" aria-label="Open"><svg><use href="#open"/></svg></button>
    <button class="tool" aria-label="Save"><svg><use href="#save"/></svg></button>
    <button class="tool" aria-label="Print"><svg><use href="#print"/></svg></button>
    <button class="tool" aria-label="Cut"><svg><use href="#cut"/></svg></button>
    <button class="tool" aria-label="Copy"><svg><use href="#copy"/></svg></button>
    <button class="tool" aria-label="Paste"><svg><use href="#paste"/></svg></button>
    <button class="tool more" aria-label="Undo"><svg><use href="#undo"/></svg></button>
    <button class="tool more" aria-label="Redo"><svg><use href="#redo"/></svg></button>
    <button class="tool" aria-label="What's this"><svg><use href="#help"/></svg></button>
  </div>
  <div class="hgroup">
    <button class="tool" aria-label="Formula"><svg><use href="#fx"/></svg></button>
    <button class="tool" aria-label="Comment and URLs"><svg><use href="#comment"/></svg></button>
    <button class="tool" aria-label="Check analysis"><svg><use href="#bulb"/></svg></button>
    <button class="tool more" aria-label="Design table"><svg><use href="#table"/></svg></button>
    <button class="tool" aria-label="Knowledge inspector"><svg><use href="#graph"/></svg></button>
    <button class="tool more" aria-label="Lock parameters"><svg><use href="#lock"/></svg></button>
    <button class="tool" aria-label="Equivalent dimensions"><svg><use href="#equiv"/></svg></button>
  </div>
  <div class="hgroup"><button class="tool" aria-label="Capture"><svg><use href="#camera"/></svg></button></div>
  <div class="hgroup"><button class="tool" aria-label="Catalog browser"><svg><use href="#catalog"/></svg></button></div>
  <div class="hgroup"><button class="tool" aria-label="Apply material"><svg><use href="#eraser"/></svg></button></div>
  <div class="hgroup"><button class="tool more" aria-label="Work on support"><svg><use href="#grid"/></svg></button></div>
  <div class="hgroup view">
    <button class="tool" aria-label="Fly mode"><svg><use href="#fly"/></svg></button>
    <button class="tool" aria-label="Fit all in"><svg><use href="#fit"/></svg></button>
    <button class="tool" aria-label="Pan"><svg><use href="#pan"/></svg></button>
    <button class="tool" aria-label="Rotate"><svg><use href="#rotate"/></svg></button>
    <button class="tool" aria-label="Zoom in"><svg><use href="#zoomin"/></svg></button>
    <button class="tool" aria-label="Zoom out"><svg><use href="#zoomout"/></svg></button>
    <button class="tool" aria-label="Normal view"><svg><use href="#normal"/></svg></button>
    <button class="tool" aria-label="Multi-view"><svg><use href="#multiview"/></svg></button>
    <button class="tool more" aria-label="Isometric view"><svg><use href="#cube"/></svg></button>
    <button class="tool more" aria-label="Shading"><svg><use href="#cyl"/></svg></button>
    <button class="tool" aria-label="Hide or show"><svg><use href="#hide"/></svg></button>
    <button class="tool" aria-label="Swap visible space"><svg><use href="#swap"/></svg></button>
  </div>
  <div class="brand">
    <svg viewBox="0 0 18 16" aria-hidden="true"><path d="M6 1c5-1 6 1 2 4" fill="none" stroke="#c83c3c" stroke-width="1.800"/><path d="M3 6c7-1 7 2 4 5-1 1-3 2-6 2l3-6" fill="none" stroke="#34388c" stroke-width="1.600"/><path d="M17 5c-5-1-7 2-4 4 3 1 1 5-4 4" fill="none" stroke="#d8a46c" stroke-width="1.800"/></svg>
    <span>CATIA</span>
  </div>
</div>

<div class="watermark" aria-hidden="true"><span class="wm-ar" lang="ar" dir="rtl">مستقل</span><span class="wm-en">mostaql.com</span></div>

<footer class="statusbar">
  <span class="message">Select an object or a command</span>
  <input class="command" type="text" value="S" aria-label="Power input">
  <button class="status-btn" aria-label="Dialog options"><svg viewBox="0 0 14 10"><path d="M1.500 1.500h7v5h-7zM8 8.500h3v-7"/></svg></button>
  <button class="status-btn" aria-label="Screen capture"><svg viewBox="0 0 14 10"><path d="M2 8.500v-4c1-4 7-4 8 0v4zM5 5h2v2H5z"/></svg></button>
</footer>
</body>
</html>
```
FILE: styles.css
```css
*, *::before, *::after { box-sizing: border-box; }
body {
  margin: 0;
  height: 100vh;
  display: flex;
  flex-direction: column;
  padding-bottom: 4px;
  position: relative;
  overflow: hidden;
  background: #000;
  color: #1c1c1c;
  font: 8px/12px "Open Sans", "Noto Sans", sans-serif;
}
button, select, input { font: inherit; color: inherit; margin: 0; }
button { padding: 0; border: 0; background: none; }
svg { display: block; }
.sprite { position: absolute; width: 0; height: 0; }

.titlebar { display: flex; align-items: center; height: 14px; padding-left: 2px; gap: 3px; background: #fff; }
.app-icon { width: 10px; height: 10px; }
.app-icon.big { width: 14px; height: 12px; }
.title { margin: 0; font-size: 8px; font-weight: 400; line-height: 12px; }
.win-controls { display: flex; gap: 23px; margin-left: auto; padding-right: 13px; }
.win-controls svg, .doc-controls svg { width: 10px; height: 10px; fill: none; stroke: #333; }

.menubar { display: flex; height: 14px; background: linear-gradient(90deg, #d9d8ee, #cfd0ea); }
.menu { padding: 0 8px; line-height: 14px; }
.menu.start { padding: 0 10px 0 6px; background: #fbe2b6; }
.menu.vpm { padding: 0 3px 0 5px; }
.menu u { text-underline-offset: 1px; }
.doc-controls { display: flex; margin-left: auto; background: #fff; }
.doc-controls button { width: 13px; display: grid; place-items: center; }

.propbar {
  display: flex;
  align-items: center;
  gap: 4px;
  height: 27px;
  padding-left: 4px;
  background: linear-gradient(#f4f4fc, #d8d6ee 30%, #d0cfe8 75%, #8c8ca8);
}
.grip, .hgroup::before, .palette .tools::before {
  content: "";
  flex: none;
  width: 2px;
  align-self: stretch;
  border-left: 1px solid #fff;
  border-right: 1px solid #a4a4bc;
}
.grip { margin: 5px 3px 9px 0; }
.combo { position: relative; width: 43px; height: 16px; }
.combo.small { width: 27px; }
.combo select {
  width: 100%;
  height: 16px;
  padding: 0 11px 0 2px;
  appearance: none;
  border: 1px solid;
  border-color: #77778a #e8e8f4 #e8e8f4 #77778a;
  border-radius: 0;
  background: #fff;
  text-overflow: clip;
}
.combo::after {
  content: "";
  position: absolute;
  top: 1px;
  right: 1px;
  width: 11px;
  height: 14px;
  background: linear-gradient(#222, #222) 50% 6px / 6px 1px no-repeat, linear-gradient(#222, #222) 50% 7px / 4px 1px no-repeat, linear-gradient(#222, #222) 50% 8px / 2px 1px no-repeat, #eeeef6;
  border-right: 1px solid #8c8c9c;
  border-bottom: 1px solid #8c8c9c;
  pointer-events: none;
}
.combo.off { opacity: .65; }

.tool { position: relative; flex: none; width: 20px; height: 20px; display: grid; place-items: center; }
.tool svg { width: 18px; height: 18px; }
.propbar .tool { width: 16px; }
.tool.more::after {
  content: "";
  position: absolute;
  right: -1px;
  bottom: -2px;
  border: 3px solid transparent;
  border-top-color: #111;
  border-bottom: 0;
}

.workspace { flex: 1; display: flex; min-height: 0; border-top: 1px solid #3c3c54; }
.viewport {
  flex: 1;
  position: relative;
  overflow: hidden;
  background: linear-gradient(#303361, #363968 20%, #3c3c6e 36%, #3b4478 39%, #3d4578 46%, #454478 49%, #464a78 63%, #50527c 67%, #5c5a84 72%, #6e6e94 78%, #8080a0 86%, #8c8ca6 93%, #9a9aae);
}
.propeller { position: absolute; left: 340px; top: 44px; width: 360px; height: 380px; }
.compass { position: absolute; right: 28px; top: 65px; width: 84px; height: 80px; }
.axes { position: absolute; right: 7px; bottom: 3px; width: 28px; height: 30px; }

.tree { position: relative; width: 200px; margin: 0; padding: 1px 0 0 3px; list-style: none; color: #dcdcf0; font: 12px/16px Roboto, "Noto Sans", sans-serif; }
.tree::before { content: ""; position: absolute; left: 8px; top: 22px; width: 1px; height: 120px; background: #c8c8dc; }
.tree li { position: relative; display: flex; align-items: center; height: 25px; }
.tree .root { height: 27px; gap: 4px; }
.tree .node { width: 20px; height: 20px; margin-right: 4px; }
.tree .root .node { margin: 0 0 6px -1px; }
.selected { background: #0b66dc; border-top: 1px solid #d4e4fc; color: #d8ecff; }
.expand {
  width: 11px;
  height: 11px;
  margin-right: 6px;
  border-radius: 50%;
  background: linear-gradient(#000, #000) center / 9px 3px no-repeat, linear-gradient(#000, #000) center / 3px 9px no-repeat, #85858f;
  box-shadow: 6px 0 0 -5px #dcdcf0, 7px 0 0 -5px #dcdcf0, 8px 0 0 -5px #dcdcf0, 9px 0 0 -5px #dcdcf0, 10px 0 0 -5px #dcdcf0;
}

.palette { position: absolute; height: 46px; background: #fff; box-shadow: 0 1px 4px #1a1a3c88; display: flex; flex-direction: column; }
.palette header { display: flex; height: 22px; justify-content: space-between; padding: 5px 1px 0 5px; }
.palette h2 { min-width: 0; margin: 0; font-size: 8px; line-height: 12px; font-weight: 400; white-space: nowrap; }
.close { flex: none; width: 14px; height: 14px; background: #c75050; color: #fff; font-size: 11px; line-height: 13px; }
.palette .tools { flex: 1; display: flex; justify-content: space-between; align-items: center; padding: 0 3px; background: linear-gradient(#fff, #dcdaf0 35%, #c6c4e0 75%, #a8a8c4); }
.palette .tools::before { margin: 2px 4px 10px 0; }
.palette .tool { flex: 0 1 20px; min-width: 0; }
.p-update { left: 211px; top: 41px; width: 30px; }
.p-structure { left: 659px; top: 36px; width: 228px; }
.p-constraints { left: 812px; top: 156px; width: 208px; }
.p-features { left: 829px; top: 258px; width: 91px; }
.p-space { left: 877px; top: 381px; width: 70px; }
.p-annotations { left: 576px; top: 419px; width: 114px; }
.p-measure { left: 764px; top: 431px; width: 70px; }

.sidebar { width: 27px; display: flex; flex-direction: column; gap: 7px; padding: 2px 3px 0 0; border-left: 3px solid #fafaff; background: linear-gradient(90deg, #e0def4, #cfcde8 70%, #9c9cb8); }
.vgroup { display: flex; flex-direction: column; align-items: center; }
.vgroup::before { content: ""; width: 12px; height: 2px; margin: 0 8px 4px 0; border-top: 1px solid #fff; border-bottom: 1px solid #b0b0c8; }

.bottombar { display: flex; gap: 6px; height: 26px; padding: 3px 4px; border-top: 1px solid #fafaff; background: linear-gradient(#ececfa, #cfcde8 40%, #c4c4de 80%, #9090ac); }
.hgroup { display: flex; align-items: center; }
.hgroup::before { height: 12px; margin: 0 4px 0 0; align-self: flex-start; }
.hgroup.view { margin-left: 10px; }
.brand { margin-left: auto; width: 28px; margin-top: -4px; color: #34307c; }
.brand svg { width: 18px; height: 16px; }
.brand span { display: block; font: italic bold 8px/8px "Liberation Sans", Arial, sans-serif; }

.watermark { position: absolute; left: 474px; bottom: 12px; display: flex; flex-direction: column; align-items: center; gap: 8px; width: 132px; color: #fff; opacity: .16; pointer-events: none; }
.wm-ar { font: bold 40px/40px "DejaVu Sans", sans-serif; }
.wm-en { font: bold 20px/16px "Open Sans", sans-serif; }

.statusbar { display: flex; align-items: center; gap: 3px; height: 17px; padding: 0 2px; background: #c9c8e2; border-top: 1px solid #a4a4bc; }
.message { flex: 1; }
.command { width: 209px; height: 14px; padding: 0 3px; border: 1px solid; border-color: #66667a #eee #eee #66667a; background: #ebebeb; border-radius: 0; }
.status-btn { width: 21px; height: 14px; display: grid; place-items: center; background: #bcbccc; border: 1px solid; border-color: #e4e4f0 #8c8c9c #8c8c9c #e4e4f0; }
.status-btn svg { width: 14px; height: 10px; fill: none; stroke: #88889a; }
```
